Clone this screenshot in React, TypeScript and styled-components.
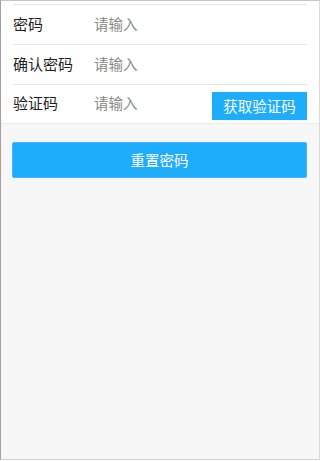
import React from 'react';
import styled, { createGlobalStyle } from 'styled-components';

const GlobalStyle = createGlobalStyle`
    html, body {
        margin: 0;
        padding: 0;
        background: #ffffff;
    }
    * {
        box-sizing: border-box;
    }
`;

const Frame = styled.div`
    width: 320px;
    height: 460px;
    border-top: 1px solid #c9c4c4;
    border-left: 1px solid #a89e9e;
    border-right: 1px solid #d9d9d9;
    border-bottom: 1px solid #d2d2d2;
    background: #f7f7f7;
    font-family: 'Noto Sans CJK SC', 'Noto Sans', sans-serif;
    overflow: hidden;
`;

const FormCard = styled.div`
    background: #ffffff;
    padding-top: 3px;
    border-bottom: 1px solid #ececec;
`;

const Row = styled.div<{ $last?: boolean }>`
    display: flex;
    align-items: center;
    height: ${(p) => (p.$last ? 39 : 40)}px;
    margin: 0 12px;
    padding-bottom: 2px;
    border-top: 1px solid #e8e8e8;
`;

const Label = styled.span`
    width: 81px;
    font-size: 15px;
    line-height: 20px;
    color: #1e1e1e;
`;

const Input = styled.input`
    flex: 1;
    min-width: 0;
    border: none;
    outline: none;
    padding: 0;
    font-family: inherit;
    font-size: 14.5px;
    line-height: 20px;
    color: #333333;
    background: transparent;

    &::placeholder {
        color: #888888;
    }
`;

const CodeButton = styled.button`
    width: 95px;
    height: 28px;
    margin-top: 6px;
    border: none;
    border-radius: 0;
    background: #1eadfb;
    color: #ffffff;
    font-family: inherit;
    font-size: 14.5px;
    line-height: 26px;
    padding: 0;
`;

const Actions = styled.div`
    padding: 18px 12px 0 11px;
`;

const SubmitButton = styled.button`
    display: block;
    width: 100%;
    height: 36px;
    border: 1px solid #3ab8fc;
    border-radius: 2px;
    background: #1eadfb;
    color: #ffffff;
    font-family: inherit;
    font-size: 14.5px;
    padding: 0 0 2px;
`;

const fields = [
    { label: '密码', type: 'password' },
    { label: '确认密码', type: 'password' },
];

const App = () => {
    return (
        <>
            <GlobalStyle />
            <Frame>
                <FormCard>
                    {fields.map((f) => (
                        <Row key={f.label}>
                            <Label>{f.label}</Label>
                            <Input type={f.type} placeholder="请输入" />
                        </Row>
                    ))}
                    <Row $last>
                        <Label>验证码</Label>
                        <Input type="text" placeholder="请输入" />
                        <CodeButton>获取验证码</CodeButton>
                    </Row>
                </FormCard>
                <Actions>
                    <SubmitButton>重置密码</SubmitButton>
                </Actions>
            </Frame>
        </>
    );
};

export default App;
